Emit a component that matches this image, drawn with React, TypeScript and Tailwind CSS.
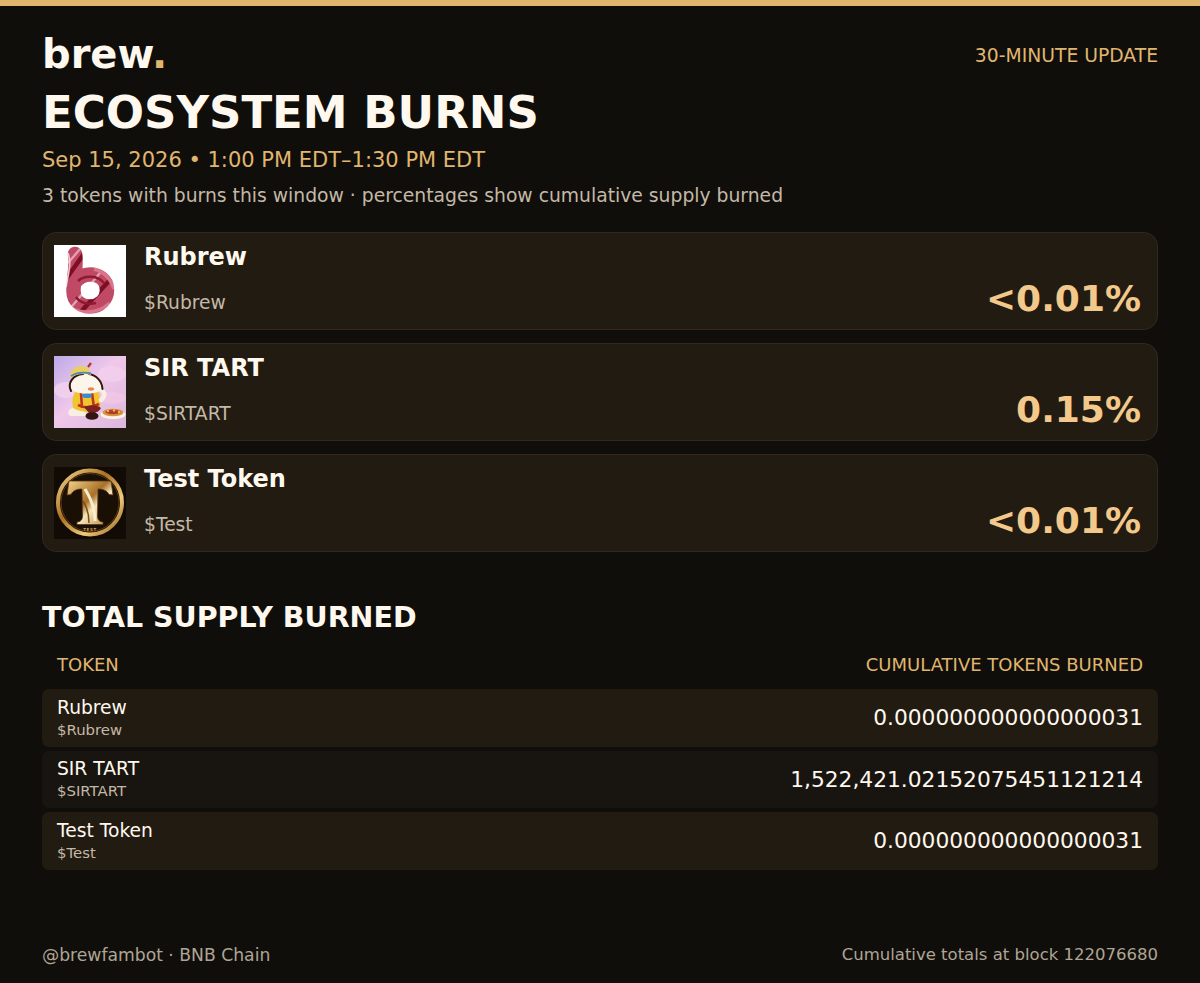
import React from "react";

const FONT = { fontFamily: '"DejaVu Sans", sans-serif' };

function RubrewLogo() {
  const d = "M21 9C23 20 19.5 34 19.5 46C19.5 56 27 61.5 36 61.5C46 61.5 53 54 53 45C53 35 45 29.5 36 29.5C30 29.5 25 32 21 37";
  return (
    <svg viewBox="0 0 72 72" className="w-[72px] h-[72px] shrink-0 block">
      <defs>
        <mask id="bm">
          <rect width="72" height="72" fill="#000" />
          <path d={d} fill="none" stroke="#fff" strokeWidth="14.5" strokeLinecap="round" />
        </mask>
      </defs>
      <rect width="72" height="72" fill="#fff" />
      <g mask="url(#bm)">
        <rect width="72" height="72" fill="#c04a65" />
        <path d="M12 34L32 6M22 72L66 24" stroke="#7e0e23" strokeWidth="4.5" fill="none" />
        <path d="M14 18L26 4M14 66L46 28" stroke="#e2a0b0" strokeWidth="2.4" fill="none" />
        <path d="M12 58C20 68 40 72 56 58M40 24C48 26 56 32 60 44" stroke="#d9768c" strokeWidth="3.5" fill="none" />
        <path d="M24 36C30 30 44 30 50 38M22 52C26 58 34 60 42 58" stroke="#8f1a30" strokeWidth="2.5" fill="none" />
        <path d="M14 8C18 18 14 30 12 42" stroke="#f2cbd4" strokeWidth="1.6" fill="none" />
      </g>
    </svg>
  );
}

function TartLogo() {
  return (
    <svg viewBox="0 0 72 72" className="w-[72px] h-[72px] shrink-0 block">
      <defs>
        <linearGradient id="sky" x1="0" y1="0" x2="1" y2="1">
          <stop offset="0" stopColor="#bcaae8" />
          <stop offset="0.45" stopColor="#efc8ea" />
          <stop offset="1" stopColor="#dcb6de" />
        </linearGradient>
      </defs>
      <rect width="72" height="72" fill="url(#sky)" />
      <ellipse cx="12" cy="34" rx="12" ry="8" fill="#f6d6ee" opacity="0.7" />
      <ellipse cx="58" cy="18" rx="14" ry="8" fill="#f3d4ee" opacity="0.6" />
      <ellipse cx="58" cy="42" rx="14" ry="6" fill="#f4c8e4" opacity="0.7" />
      <path d="M16 60C12 57 15 52 21 51L31 52L32 60Z" fill="#f7efe4" />
      <path d="M21 36H44C47 42 47 50 45 54C37 58 26 56 19 52C18 46 18 41 21 36Z" fill="#f0c52f" />
      <path d="M27 37L28 52M38 37L40 52M24 49C30 52 38 52 45 48" stroke="#c0341e" strokeWidth="2.6" fill="none" />
      <ellipse cx="33" cy="39.5" rx="5" ry="2.6" fill="#3d8bc8" />
      <path d="M30 51C35 49 43 48 47 52C45 56 42 56 41 57L35 57Z" fill="#7a2220" />
      <ellipse cx="38" cy="60" rx="6.5" ry="3.8" fill="#33150f" />
      <path d="M46 33C51 36 52 40 47 44" stroke="#f7efe4" strokeWidth="4.5" fill="none" strokeLinecap="round" />
      <path d="M16 29C16 22 24 18 31 18C40 18 48 24 48 31C47 37 38 38 30 37.5C22 37 17 35 16 29Z" fill="#fbf5ec" />
      <path d="M17 35C13 27 19 19 29 18M35 18C42 19 48 25 48.5 33" fill="none" stroke="#33170f" strokeWidth="2" strokeLinecap="round" />
      <path d="M16 22C15 15 21 10 27 10C33 10 37 14 37 19C30 17 22 18 16 22Z" fill="#e8cf60" />
      <path d="M17 20C23 16.5 30 16 37 17.5" stroke="#4d86b8" strokeWidth="1.8" fill="none" />
      <path d="M34 11L37 7" stroke="#b0342a" strokeWidth="2.2" />
      <ellipse cx="37" cy="33" rx="3.2" ry="1.7" fill="#e58a4a" />
      <ellipse cx="59" cy="58.5" rx="12.5" ry="4.6" fill="#fbf3e6" />
      <ellipse cx="59" cy="56.5" rx="10.5" ry="3.8" fill="#d8923c" />
      <ellipse cx="59" cy="56" rx="7.5" ry="2.2" fill="#b23a26" />
      <circle cx="54" cy="55" r="1.2" fill="#e9b560" />
      <circle cx="60" cy="54.5" r="1.2" fill="#e9b560" />
      <circle cx="65" cy="56" r="1.2" fill="#e9b560" />
    </svg>
  );
}

function TestLogo() {
  return (
    <svg viewBox="0 0 72 72" className="w-[72px] h-[72px] shrink-0 block">
      <defs>
        <linearGradient id="gd" x1="0" y1="0" x2="1" y2="1">
          <stop offset="0" stopColor="#f6d98e" />
          <stop offset="0.4" stopColor="#a86f24" />
          <stop offset="0.7" stopColor="#f0cb7a" />
          <stop offset="1" stopColor="#8c5a1c" />
        </linearGradient>
        <linearGradient id="gt" x1="0" y1="0" x2="1" y2="1">
          <stop offset="0" stopColor="#f4d48a" />
          <stop offset="0.45" stopColor="#a9702a" />
          <stop offset="0.6" stopColor="#f7e6bd" />
          <stop offset="1" stopColor="#b07c30" />
        </linearGradient>
      </defs>
      <rect width="72" height="72" fill="#120a04" />
      <circle cx="36" cy="35.5" r="32" fill="#1a0f05" stroke="url(#gd)" strokeWidth="4" />
      <circle cx="36" cy="35.5" r="29" fill="none" stroke="#6d4516" strokeWidth="0.8" />
      <path d="M15 14H57L59 28L55 27.5C53 23.5 49 22 44 22L43.5 49C43.5 53 46 55 49 55V57.5H23V55C26 55 28.5 53 28.5 49L28 22C23 22 19 23.5 17 27.5L13 28Z" fill="url(#gt)" stroke="#5c3810" strokeWidth="0.8" />
      <path d="M31 22C36 30 41 40 41 54" stroke="#f9edcc" strokeWidth="3" fill="none" />
      <path d="M29 34C33 40 35 47 35 56" stroke="#7a4e18" strokeWidth="1.5" fill="none" />
      <text x="36" y="64" textAnchor="middle" fontSize="4" fontWeight="700" fill="#c99a4c" style={{ letterSpacing: "0.6px" }}>TEST</text>
    </svg>
  );
}

function Card({ logo, name, sym, pct }: { logo: React.ReactNode; name: string; sym: string; pct: string }) {
  return (
    <div className="h-[98px] flex items-center gap-[18px] pl-[11px] pr-[16px] rounded-[14px] border border-[#31291e] bg-[#221b12]">
      {logo}
      <div className="flex-1 self-stretch flex flex-col pt-[10px]">
        <div className="text-[24px] leading-[28px] font-bold text-[#fff8ee]">{name}</div>
        <div className="flex items-end justify-between mt-[7px]">
          <div className="text-[18.7px] leading-[26px] mb-[4px] text-[#c4b8a6]">{sym}</div>
          <div className="text-[36px] leading-[42px] font-bold text-[#f2c98a]">{pct}</div>
        </div>
      </div>
    </div>
  );
}

function Row({ name, sym, value, odd }: { name: string; sym: string; value: string; odd?: boolean }) {
  return (
    <div className={`h-[57.5px] flex items-center justify-between px-[15px] rounded-[7px] ${odd ? "bg-[#181510]" : "bg-[#221b12]"}`}>
      <div className="flex flex-col">
        <div className="text-[18.7px] leading-[23px] text-[#fff8ee]">{name}</div>
        <div className="text-[14.9px] leading-[19px] mt-[2px] text-[#c4b8a6]">{sym}</div>
      </div>
      <div className="text-[21.76px] leading-[26px] pt-[1px] text-[#fff8ee]">{value}</div>
    </div>
  );
}

export default function App() {
  return (
    <div style={FONT} className="w-[1200px] h-[983px] bg-[#0f0e0b] flex flex-col overflow-hidden">
      <div className="h-[6px] bg-[#e0b66f] shrink-0" />
      <div className="flex-1 flex flex-col px-[42px]">
        <div className="flex items-start justify-between mt-[24px] h-[48px]">
          <div className="text-[40px] leading-[48px] font-bold text-[#fff8ee]">
            brew<span className="text-[#e0b66f]">.</span>
          </div>
          <div className="text-[18.75px] leading-[26px] mt-[13px] text-[#e0b66f]">30-MINUTE UPDATE</div>
        </div>
        <div className="text-[45px] leading-[54px] font-bold text-[#fff8ee] mt-[8px]">ECOSYSTEM BURNS</div>
        <div className="text-[21px] leading-[28px] text-[#e0b66f] mt-[6px]">Sep 15, 2026 • 1:00 PM EDT–1:30 PM EDT</div>
        <div className="text-[18.75px] leading-[26px] text-[#c4b8a6] mt-[9px]">3 tokens with burns this window · percentages show cumulative supply burned</div>
        <div className="flex flex-col gap-[13px] mt-[23px]">
          <Card logo={<RubrewLogo />} name="Rubrew" sym="$Rubrew" pct="<0.01%" />
          <Card logo={<TartLogo />} name="SIR TART" sym="$SIRTART" pct="0.15%" />
          <Card logo={<TestLogo />} name="Test Token" sym="$Test" pct="<0.01%" />
        </div>
        <div className="text-[28.5px] leading-[34px] font-bold text-[#fff8ee] mt-[49px]">TOTAL SUPPLY BURNED</div>
        <div className="flex justify-between px-[15px] text-[18px] leading-[24px] text-[#e0b66f] mt-[18px]">
          <div>TOKEN</div>
          <div>CUMULATIVE TOKENS BURNED</div>
        </div>
        <div className="flex flex-col gap-[4px] mt-[12px]">
          <Row name="Rubrew" sym="$Rubrew" value="0.000000000000000031" />
          <Row name="SIR TART" sym="$SIRTART" value="1,522,421.02152075451121214" odd />
          <Row name="Test Token" sym="$Test" value="0.000000000000000031" />
        </div>
        <div className="flex-1" />
        <div className="flex justify-between items-center leading-[24px] text-[#b0a594] mb-[16px]">
          <div className="text-[17.2px]">@brewfambot · BNB Chain</div>
          <div className="text-[16.5px]">Cumulative totals at block 122076680</div>
        </div>
      </div>
    </div>
  );
}
